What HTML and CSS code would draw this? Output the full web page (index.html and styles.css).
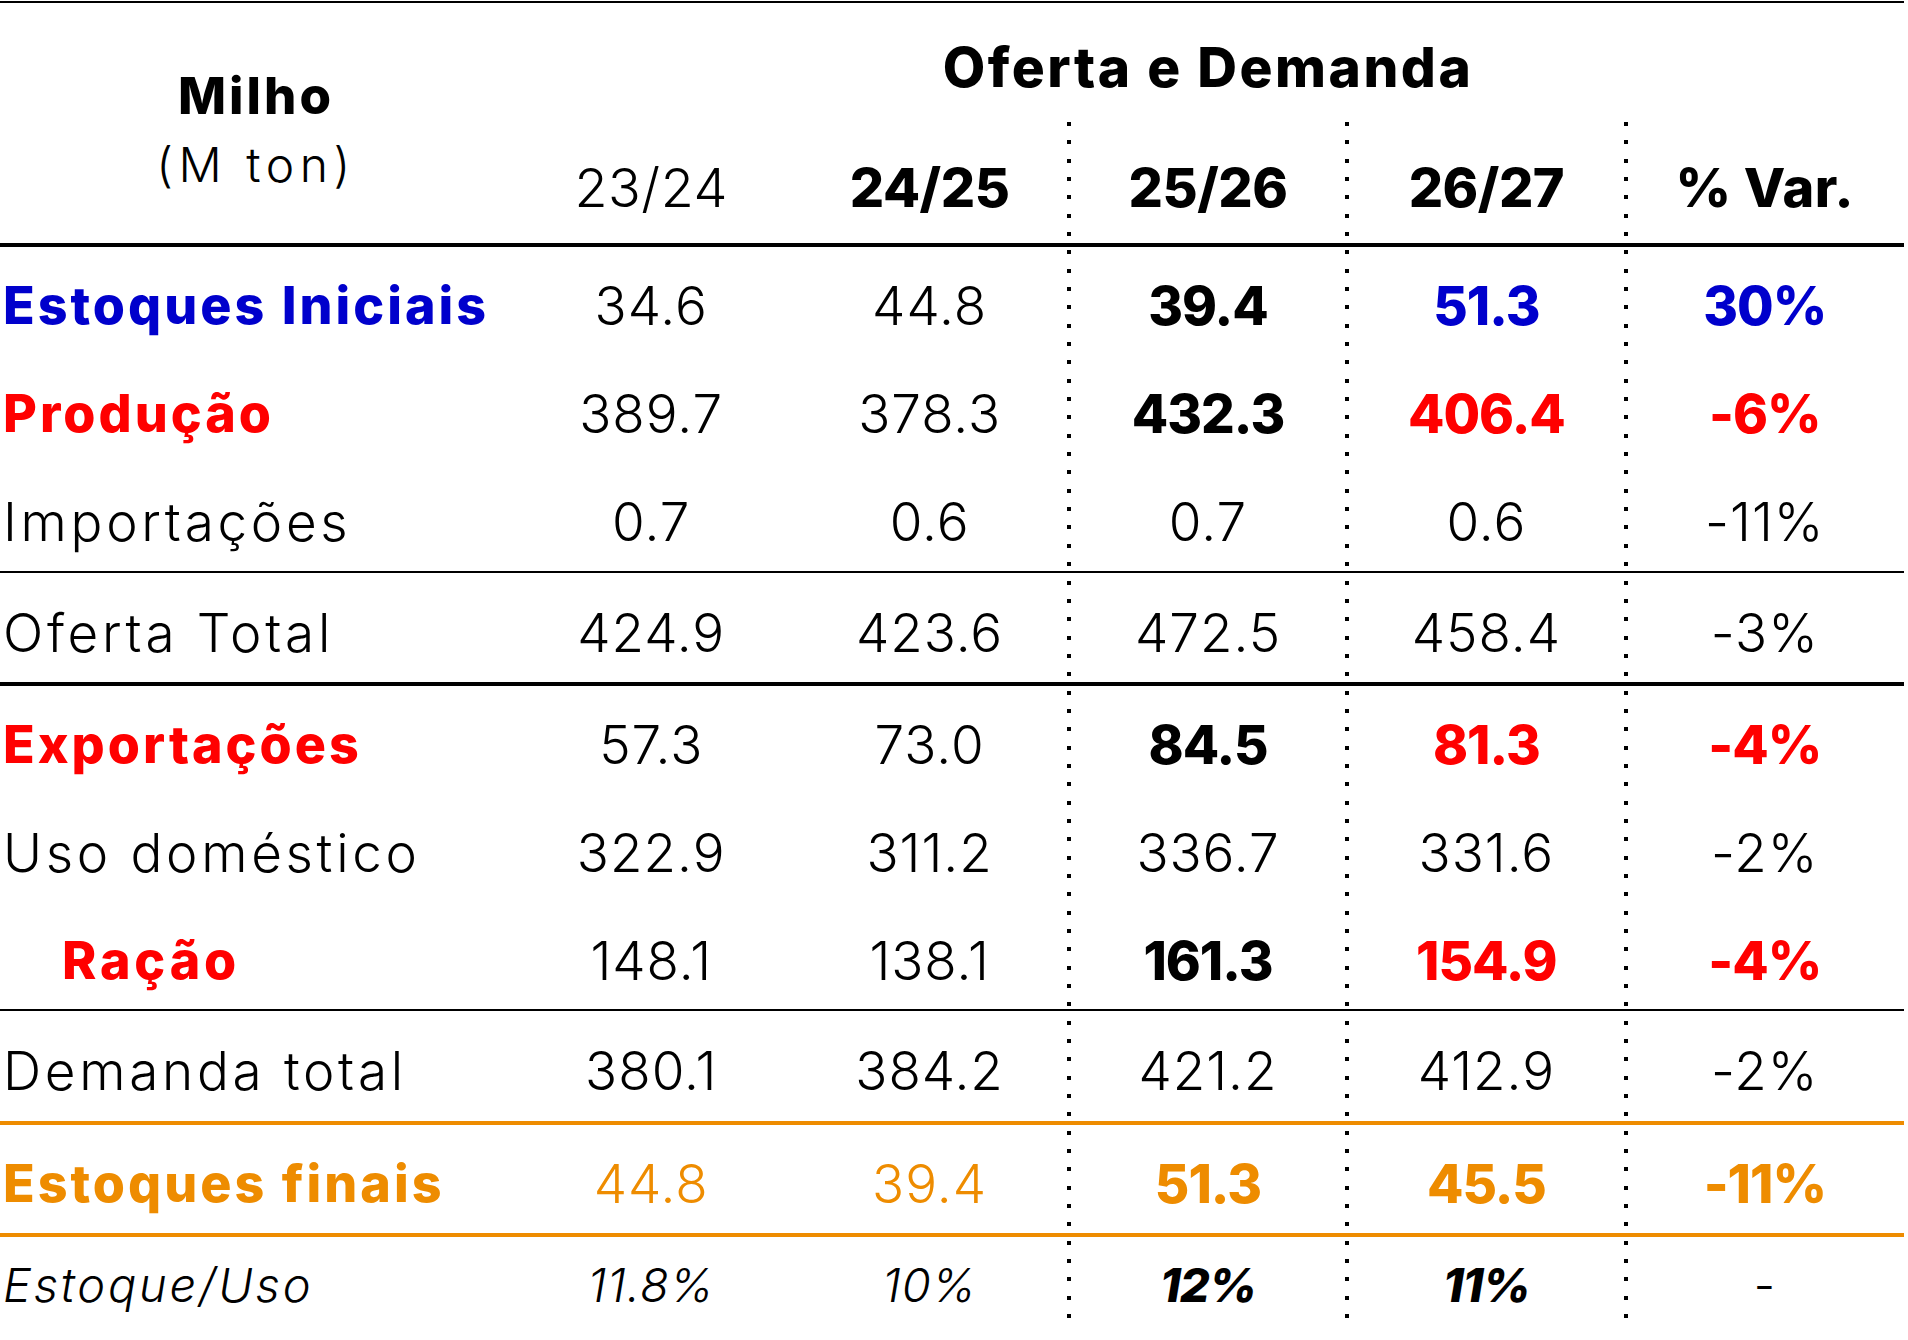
FILE: index.html
```html
<!DOCTYPE html>
<html lang="pt-BR">
<head>
<meta charset="utf-8">
<title>Milho - Oferta e Demanda</title>
<link rel="stylesheet" href="styles.css">
</head>
<body>
<div class="table">
  <div class="head">
    <div class="corner">
      <div class="corner-title">Milho</div>
      <div class="corner-sub">(M ton)</div>
    </div>
    <div class="title">Oferta e Demanda</div>
    <div class="yr">23/24</div>
    <div class="yr b">24/25</div>
    <div class="yr b">25/26</div>
    <div class="yr b">26/27</div>
    <div class="yr b var">% Var.</div>
  </div>

  <div class="row r1">
    <div class="lbl b blue">Estoques Iniciais</div>
    <div class="c">34.6</div><div class="c">44.8</div><div class="c b">39.4</div><div class="c b blue">51.3</div><div class="c b blue">30%</div>
  </div>
  <div class="row r2">
    <div class="lbl b red">Produção</div>
    <div class="c">389.7</div><div class="c">378.3</div><div class="c b">432.3</div><div class="c b red">406.4</div><div class="c b red">-6%</div>
  </div>
  <div class="row r3 thin">
    <div class="lbl">Importações</div>
    <div class="c">0.7</div><div class="c">0.6</div><div class="c">0.7</div><div class="c">0.6</div><div class="c">-11%</div>
  </div>
  <div class="row r4 thick">
    <div class="lbl">Oferta Total</div>
    <div class="c">424.9</div><div class="c">423.6</div><div class="c">472.5</div><div class="c">458.4</div><div class="c">-3%</div>
  </div>
  <div class="row r5">
    <div class="lbl b red">Exportações</div>
    <div class="c">57.3</div><div class="c">73.0</div><div class="c b">84.5</div><div class="c b red">81.3</div><div class="c b red">-4%</div>
  </div>
  <div class="row r6">
    <div class="lbl">Uso doméstico</div>
    <div class="c">322.9</div><div class="c">311.2</div><div class="c">336.7</div><div class="c">331.6</div><div class="c">-2%</div>
  </div>
  <div class="row r7 thin">
    <div class="lbl b red indent">Ração</div>
    <div class="c">148.1</div><div class="c">138.1</div><div class="c b">161.3</div><div class="c b red">154.9</div><div class="c b red">-4%</div>
  </div>
  <div class="row r8 orange-line">
    <div class="lbl">Demanda total</div>
    <div class="c">380.1</div><div class="c">384.2</div><div class="c">421.2</div><div class="c">412.9</div><div class="c">-2%</div>
  </div>
  <div class="row r9 orange-line orange">
    <div class="lbl b">Estoques finais</div>
    <div class="c">44.8</div><div class="c">39.4</div><div class="c b">51.3</div><div class="c b">45.5</div><div class="c b">-11%</div>
  </div>
  <div class="row r10 small">
    <div class="lbl it">Estoque/Uso</div>
    <div class="c it">11.8%</div><div class="c it">10%</div><div class="c it b">12%</div><div class="c it b">11%</div><div class="c">-</div>
  </div>
</div>
</body>
</html>
```

FILE: styles.css
```css
html, body {
  margin: 0;
  padding: 0;
  background: #ffffff;
}

body {
  font-family: Inter, "Noto Sans", "Liberation Sans", sans-serif;
  color: #000000;
  font-weight: 300;
}

.table {
  width: 1904px;
  margin-top: 1px;
  border-top: 2px solid #000;
  background-image:
    repeating-linear-gradient(to bottom, #000 0, #000 4px, transparent 4px, transparent 18.34px),
    repeating-linear-gradient(to bottom, #000 0, #000 4px, transparent 4px, transparent 18.34px),
    repeating-linear-gradient(to bottom, #000 0, #000 4px, transparent 4px, transparent 18.34px);
  background-size: 4px 1196px, 4px 1196px, 4px 1196px;
  background-position: 1067px 119px, 1345px 119px, 1624px 119px;
  background-repeat: no-repeat;
}

.head {
  display: grid;
  grid-template-columns: 512px repeat(5, 1fr);
  grid-template-rows: 119px 121px;
  border-bottom: 4px solid #000;
}

.corner {
  grid-column: 1;
  grid-row: 1 / span 2;
  text-align: center;
  padding-top: 63px;
  box-sizing: border-box;
}

.corner-title {
  font-size: 51px;
  line-height: 60px;
  font-weight: 800;
  letter-spacing: 3px;
}

.corner-sub {
  font-size: 48px;
  line-height: 54px;
  font-weight: 300;
  letter-spacing: 5.5px;
  margin-top: 12px;
}

.title {
  grid-column: 2 / span 5;
  grid-row: 1;
  display: flex;
  align-items: center;
  justify-content: center;
  padding-top: 9px;
  box-sizing: border-box;
  font-size: 55px;
  font-weight: 800;
  letter-spacing: 2.5px;
}

.yr {
  grid-row: 2;
  display: flex;
  align-items: center;
  justify-content: center;
  padding-top: 10px;
  box-sizing: border-box;
  font-size: 54px;
  font-weight: 300;
  letter-spacing: 0.5px;
}

.yr.b {
  font-weight: 800;
  letter-spacing: -0.5px;
}

.yr.var {
  letter-spacing: 0.5px;
}

.row {
  display: grid;
  grid-template-columns: 512px repeat(5, 1fr);
  align-items: center;
  padding-top: 10px;
  font-size: 53px;
  line-height: 60px;
}

.r1, .r2, .r3, .r5, .r6, .r9 { height: 98px; }
.r4 { height: 99px; }
.r7 { height: 97px; }
.r8 { height: 100px; }
.r10 { height: 70px; padding-top: 13px; }

.thin { border-bottom: 2px solid #000; }
.thick { border-bottom: 4px solid #000; }
.orange-line { border-bottom: 4px solid #ee8c00; }

.lbl {
  padding-left: 3px;
  white-space: nowrap;
  letter-spacing: 3.7px;
}

.lbl.b {
  font-size: 52px;
  letter-spacing: 3px;
}

.lbl.indent {
  padding-left: 62px;
  letter-spacing: 3.8px;
}

.c {
  text-align: center;
  white-space: nowrap;
  letter-spacing: 1px;
}

.c.b {
  letter-spacing: -1px;
}

.b { font-weight: 800; }
.it { font-style: italic; }

.blue { color: #0000cc; }
.red { color: #ff0000; }
.orange { color: #ee8c00; }

.small {
  font-size: 47px;
}

.r10 .lbl {
  letter-spacing: 2.8px;
}
```
